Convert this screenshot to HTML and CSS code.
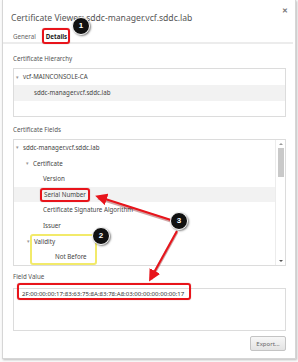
FILE: index.html
```html
<!DOCTYPE html>
<html>
<head>
<meta charset="utf-8">
<link rel="stylesheet" href="styles.css">
</head>
<body>
<div class="dialog">
  <div class="titlebar">
    <span class="title">Certificate Viewer: sddc-manager.vcf.sddc.lab</span>
    <span class="close">&#x2715;</span>
  </div>
  <div class="tabs">
    <span class="tab">General</span>
    <span class="tab active">Details</span>
  </div>
  <div class="content">
    <div class="label">Certificate Hierarchy</div>
    <div class="box hier">
      <div class="row"><span class="caret">&#9662;</span>vcf-MAINCONSOLE-CA</div>
      <div class="row sel ind2">sddc-manager.vcf.sddc.lab</div>
    </div>
    <div class="label">Certificate Fields</div>
    <div class="box fields">
      <div class="tree">
        <div class="row"><span class="caret">&#9662;</span>sddc-manager.vcf.sddc.lab</div>
        <div class="row ind1"><span class="caret">&#9662;</span>Certificate</div>
        <div class="row ind3">Version</div>
        <div class="row ind3 sel"><span class="redbox">Serial Number</span></div>
        <div class="row ind3">Certificate Signature Algorithm</div>
        <div class="row ind3">Issuer</div>
        <div class="yellowbox">
          <div class="row ind2"><span class="caret">&#9662;</span>Validity</div>
          <div class="row ind4">Not Before</div>
        </div>
      </div>
      <div class="scrollbar">
        <span class="sarrow up"></span>
        <span class="thumb"></span>
        <span class="spacer"></span>
        <span class="sarrow down"></span>
      </div>
    </div>
    <div class="label vlabel">Field Value</div>
    <div class="box value">
      <span class="val">2F:00:00:00:17:83:63:75:8A:83:78:A8:03:00:00:00:00:00:17</span>
    </div>
    <div class="footer"><button class="export">Export...</button></div>
  </div>
</div>

<svg class="arrows" width="298" height="362" viewBox="0 0 298 362">
  <defs>
    <marker id="ah" markerWidth="6" markerHeight="6" refX="4" refY="3" orient="auto" markerUnits="strokeWidth">
      <path d="M0,0 L6,3 L0,6 Z" fill="#e8141b"/>
    </marker>
  </defs>
  <g stroke="#7a0000" stroke-width="3" opacity="0.35" fill="none">
    <line x1="171" y1="221" x2="98" y2="198"/>
    <line x1="177" y1="232" x2="151" y2="279"/>
  </g>
  <g stroke="#e8141b" stroke-width="2" fill="none">
    <line x1="171" y1="220" x2="99" y2="197" marker-end="url(#ah)"/>
    <line x1="177" y1="231" x2="151" y2="278" marker-end="url(#ah)"/>
  </g>
</svg>

<div class="valbox"></div>
<span class="badge b1">1</span>
<span class="badge b2">2</span>
<span class="badge b3">3</span>
</body>
</html>
```

FILE: styles.css
```css
html, body {
  margin: 0;
  padding: 0;
}
body {
  width: 298px;
  height: 362px;
  background: #fafafa;
  font-family: "Noto Sans", "Open Sans", sans-serif;
  color: #444;
  position: relative;
  overflow: hidden;
}
.dialog {
  box-sizing: border-box;
  margin-left: 2px;
  width: 294px;
  height: 359px;
  background: #fff;
  border: 1px solid #d6d6d6;
  border-top: none;
  box-shadow: 1px 1px 2px rgba(0,0,0,0.25);
  display: flex;
  flex-direction: column;
}
.dialog > * { flex-shrink: 0; }
.titlebar {
  height: 30px;
  display: flex;
  justify-content: space-between;
  align-items: flex-start;
  padding: 0 7px 0 8px;
}
.title {
  font-size: 8.6px;
  color: #555;
  margin-top: 12px;
}
.close {
  font-size: 7px;
  color: #777;
  margin-top: 6px;
  font-weight: bold;
}
.tabs {
  height: 12px;
  border-bottom: 2px solid #ececec;
  display: flex;
  align-items: center;
  gap: 10px;
  padding-left: 10px;
  margin-right: 2px;
}
.tab {
  font-size: 6.2px;
  color: #666;
}
.tab.active {
  color: #222;
  font-weight: bold;
  position: relative;
}
.tab.active::after {
  content: "";
  position: absolute;
  left: -4px;
  right: -3px;
  top: -4px;
  bottom: -3px;
  border: 2px solid #e8141b;
  border-radius: 3px;
  box-shadow: 0 0 1px rgba(120,0,0,0.5);
}
.content {
  display: flex;
  flex-direction: column;
  padding: 9px 9px 8px 10px;
}
.content > * { flex-shrink: 0; }
.label {
  font-size: 6.2px;
  color: #555;
  height: 12px;
  line-height: 12px;
  margin-bottom: 3px;
}
.box {
  border: 1px solid #dcdcdc;
  background: #fff;
}
.hier {
  height: 47px;
  margin-bottom: 7px;
}
.row {
  height: 15.6px;
  line-height: 15.6px;
  font-size: 6.2px;
  color: #444;
  padding-left: 9px;
  position: relative;
  white-space: nowrap;
}
.hier .row {
  height: 16px;
  line-height: 16px;
}
.caret {
  position: absolute;
  margin-left: -7px;
  font-size: 5px;
  color: #999;
}
.sel {
  background: #f2f2f2;
}
.ind1 { padding-left: 19px; }
.ind2 { padding-left: 20px; }
.ind3 { padding-left: 29px; }
.ind4 { padding-left: 41px; }
.hier .ind2 { padding-left: 20px; }
.fields {
  height: 125px;
  display: flex;
  margin-bottom: 5px;
}
.tree {
  flex: 1;
  overflow: hidden;
}
.redbox {
  display: inline-block;
  line-height: 10px;
  padding: 0 2px;
  margin-left: -3px;
  border: 2px solid #e8141b;
  border-radius: 3px;
  box-shadow: 0 0 1px rgba(120,0,0,0.5);
}
.yellowbox {
  position: relative;
}
.yellowbox::after {
  content: "";
  position: absolute;
  left: 16px;
  top: 0;
  width: 63px;
  height: 27px;
  border: 2px solid #f2ea6a;
  border-radius: 3px;
}
.scrollbar {
  width: 9px;
  border-left: 1px solid #ececec;
  display: flex;
  flex-direction: column;
  align-items: center;
}
.sarrow {
  width: 0;
  height: 0;
  border-left: 2px solid transparent;
  border-right: 2px solid transparent;
  margin: 3px 0;
}
.sarrow.up { border-bottom: 2px solid #999; }
.sarrow.down { border-top: 2px solid #555; }
.thumb {
  width: 6px;
  height: 29px;
  background: #c9c9c9;
}
.spacer { flex: 1; }
.vlabel {
  margin-bottom: 5px;
}
.value {
  height: 41px;
  padding: 0 0 0 8px;
  font-size: 6.1px;
  line-height: 9px;
}
.val {
  color: #333;
}
.footer {
  display: flex;
  justify-content: flex-end;
  margin-top: 5px;
}
.export {
  width: 36px;
  height: 15px;
  padding: 0;
  font-family: "Noto Sans", sans-serif;
  font-size: 6px;
  color: #666;
  background: linear-gradient(#f7f7f7, #e3e3e3);
  border: 1px solid #c4c4c4;
  border-radius: 2px;
}
.arrows {
  position: absolute;
  left: 0;
  top: 0;
  pointer-events: none;
}
.valbox {
  position: absolute;
  left: 17px;
  top: 283px;
  width: 170px;
  height: 13px;
  border: 2px solid #e8141b;
  border-radius: 3px;
  box-shadow: 0 0 1px rgba(120,0,0,0.5);
}
.badge {
  position: absolute;
  width: 16px;
  height: 16px;
  border-radius: 50%;
  background: #111;
  border: 1.5px solid #fff;
  box-shadow: 1px 1px 2px rgba(0,0,0,0.5);
  color: #fff;
  font-family: "Liberation Sans", sans-serif;
  font-size: 8px;
  font-weight: bold;
  text-align: center;
  line-height: 16px;
}
.b1 { left: 72px; top: 17px; }
.b2 { left: 92px; top: 227px; }
.b3 { left: 170px; top: 212px; }
```
